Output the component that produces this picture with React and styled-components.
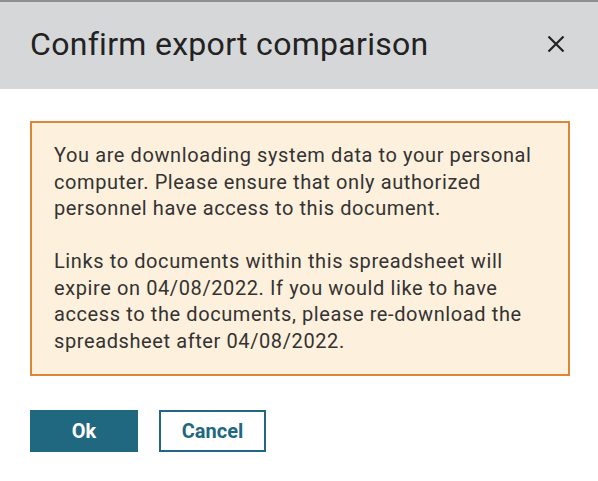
import React from 'react';
import styled, { createGlobalStyle } from 'styled-components';

const GlobalStyle = createGlobalStyle`
  html, body {
    margin: 0;
    padding: 0;
    background: #ffffff;
    font-family: Roboto, "Liberation Sans", sans-serif;
  }
`;

const Dialog = styled.div`
  width: 598px;
  height: 481px;
  background: #ffffff;
  border-top: 2px solid #8f8f8f;
  box-sizing: border-box;
`;

const Header = styled.div`
  display: flex;
  align-items: center;
  justify-content: space-between;
  box-sizing: border-box;
  height: 87px;
  padding: 0 33px 3px 30px;
  background: #d6d7d9;
`;

const Title = styled.h2`
  margin: 0;
  font-size: 32px;
  font-weight: 400;
  color: #222;
  letter-spacing: 0.3px;
`;

const CloseButton = styled.button`
  border: none;
  background: none;
  padding: 0;
  width: 18px;
  height: 18px;
  display: flex;
  align-items: center;
  justify-content: center;
  cursor: pointer;
  color: #222;
`;

const Body = styled.div`
  padding: 32px 28px 0 30px;
`;

const Notice = styled.div`
  background: #fdf0dc;
  border: 2px solid #dc8738;
  padding: 19px 20px 20px 22px;
  color: #333;
  font-size: 20px;
  line-height: 26.5px;
  letter-spacing: 0.6px;
`;

const Paragraph = styled.p`
  margin: 0;
  & + & {
    margin-top: 26.5px;
  }
`;

const Actions = styled.div`
  display: flex;
  gap: 21px;
  margin-top: 34px;
`;

const Button = styled.button`
  box-sizing: border-box;
  width: ${props => props.primary ? '108px' : '107px'};
  height: 42px;
  padding: 0;
  font-family: Roboto, "Liberation Sans", sans-serif;
  font-size: 20px;
  font-weight: 700;
  border: 2px solid #1f6880;
  background: ${props => props.primary ? '#1f6880' : '#ffffff'};
  color: ${props => props.primary ? '#ffffff' : '#1f6880'};
  cursor: pointer;
`;

const CloseIcon = () => (
  <svg width="18" height="18" viewBox="0 0 18 18">
    <path d="M1.5 1.5 L16.5 16.5 M16.5 1.5 L1.5 16.5" stroke="currentColor" strokeWidth="2.2" />
  </svg>
);

const App = () => {
  return (
    <>
      <GlobalStyle />
      <Dialog>
        <Header>
          <Title>Confirm export comparison</Title>
          <CloseButton aria-label="Close"><CloseIcon /></CloseButton>
        </Header>
        <Body>
          <Notice>
            <Paragraph>
              You are downloading system data to your personal computer. Please ensure that only authorized personnel have access to this document.
            </Paragraph>
            <Paragraph>
              Links to documents within this spreadsheet will expire on 04/08/2022. If you would like to have access to the documents, please re-download the spreadsheet after 04/08/2022.
            </Paragraph>
          </Notice>
          <Actions>
            <Button primary>Ok</Button>
            <Button>Cancel</Button>
          </Actions>
        </Body>
      </Dialog>
    </>
  );
};

export default App;
